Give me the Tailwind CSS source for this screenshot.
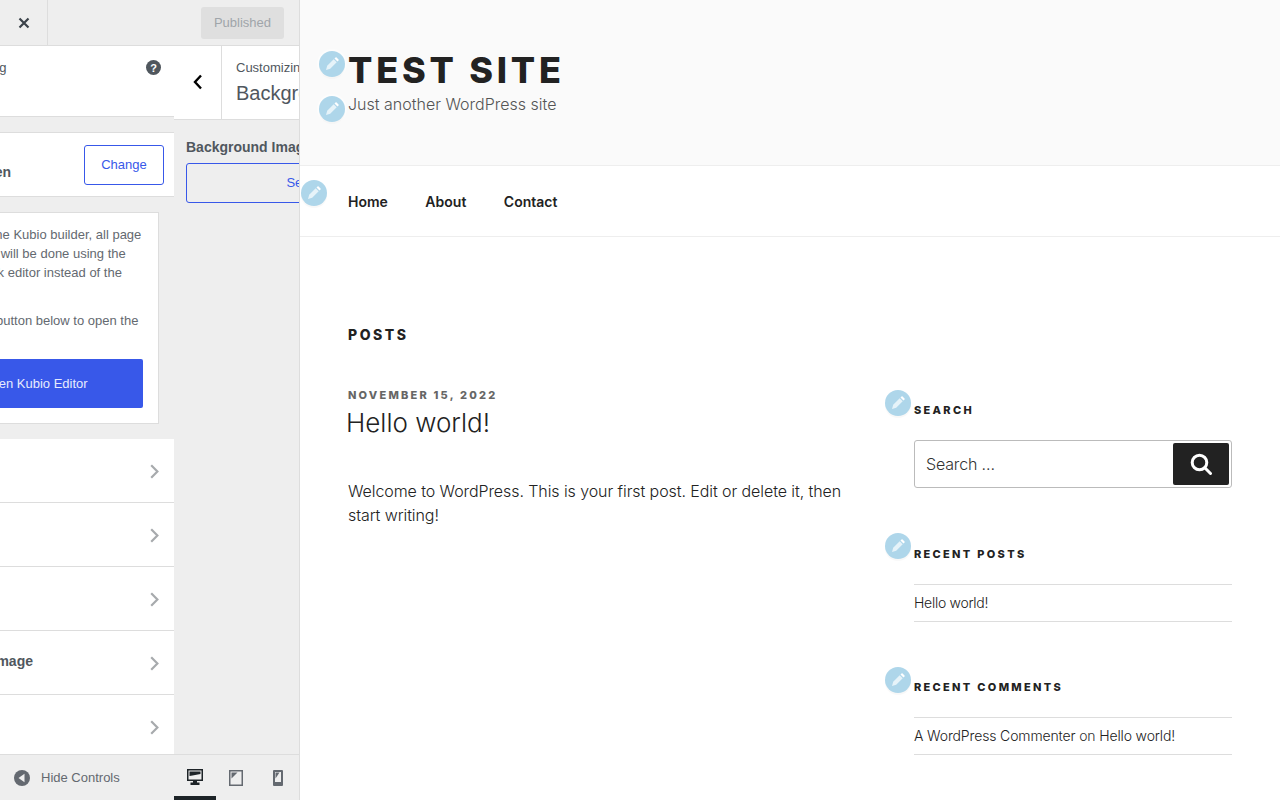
<!DOCTYPE html>
<html lang="en">
<head>
    <meta charset="UTF-8">
    <meta name="viewport" content="width=device-width, initial-scale=1.0">
    <title>Customize: Test Site</title>
    <script src="https://cdn.jsdelivr.net/npm/@tailwindcss/browser@4"></script>
</head>
<body class="h-[800px] w-[1280px] overflow-hidden flex font-['Liberation_Sans',sans-serif] bg-white">

    <!-- Customizer sidebar -->
    <aside class="w-[300px] h-[800px] shrink-0 flex flex-col bg-[#eeeeee] border-r border-[#dddddd] overflow-hidden">
        <!-- Top actions -->
        <div class="h-[46px] shrink-0 flex items-center border-b border-[#dddddd]">
            <div class="w-[48px] h-[45px] flex items-center justify-center border-r border-[#dddddd]">
                <svg class="w-[12px] h-[12px]" viewBox="0 0 12 12"><path d="M1.5 1.500l9 9M10.500 1.500l-9 9" stroke="#3c434a" stroke-width="2.2"/></svg>
            </div>
            <div class="ml-auto mr-[15px] w-[83px] h-[32px] rounded-[3px] bg-[#dfdfdf] text-[#a0a5aa] text-[13px] flex items-center justify-center">Published</div>
        </div>

        <div class="flex flex-1 min-h-0">
            <!-- Outer panel, slid off to the left -->
            <div class="w-[174px] shrink-0 overflow-hidden">
                <div class="w-[300px] ml-[-126px]">
                    <div class="h-[71px] bg-white border-b border-[#dddddd] relative">
                        <div class="text-[13px] text-[#50575e] pl-[16px] pt-[12px] whitespace-nowrap">You are customizing</div>
                        <svg class="absolute left-[272px] top-[14px] w-[15px] h-[15px]" viewBox="0 0 15 15"><circle cx="7.500" cy="7.500" r="7.500" fill="#50575e"/><text x="7.500" y="11.500" text-anchor="middle" font-size="11" font-weight="700" fill="#fff" font-family="Liberation Sans">?</text></svg>
                    </div>
                    <div class="mt-[15px] h-[65px] bg-white border-y border-[#dddddd] relative">
                        <div class="absolute right-[163px] top-[32px] text-[14px] font-bold text-[#50575e] whitespace-nowrap leading-none">Active screen</div>
                        <div class="absolute left-[210px] top-[12px] w-[80px] h-[40px] rounded-[3px] border border-[#3858e9] text-[#3858e9] text-[13px] flex items-center justify-center">Change</div>
                    </div>
                    <div class="mt-[15px] ml-[15px] w-[270px] h-[212px] bg-white border border-[#dddddd] text-[13px] leading-[19px] text-[#646970] pt-[12px] pl-[15px]">
                        <p class="whitespace-nowrap">When you use the Kubio builder, all page<br><span class="ml-[1px]">content building will be done using the</span><br><span class="ml-[3px]">your Kubio block editor instead of the</span><br>WordPress.</p>
                        <p class="whitespace-nowrap mt-[10px]"><span class="ml-[5px]">Click the large button below to open the</span><br>editor.</p>
                        <div class="mt-[10px] w-[238px] h-[49px] rounded-[2px] bg-[#3858e9] text-[#e6ebfd] flex items-center justify-center text-[13px] pl-[21px]">Open Kubio Editor</div>
                    </div>
                    <div class="mt-[15px]">
                        <div class="h-[64px] bg-white border-b border-[#dddddd] flex items-center justify-end pr-[15px] pt-[2px]">
                            <svg class="w-[9px] h-[15px]" viewBox="0 0 9 15"><path d="M1.200 1.200l6.200 6.300-6.200 6.300" fill="none" stroke="#a7aaad" stroke-width="2.2"/></svg>
                        </div>
                        <div class="h-[64px] bg-white border-b border-[#dddddd] flex items-center justify-end pr-[15px] pt-[2px]">
                            <svg class="w-[9px] h-[15px]" viewBox="0 0 9 15"><path d="M1.200 1.200l6.200 6.300-6.200 6.300" fill="none" stroke="#a7aaad" stroke-width="2.2"/></svg>
                        </div>
                        <div class="h-[64px] bg-white border-b border-[#dddddd] flex items-center justify-end pr-[15px] pt-[2px]">
                            <svg class="w-[9px] h-[15px]" viewBox="0 0 9 15"><path d="M1.200 1.200l6.200 6.300-6.200 6.300" fill="none" stroke="#a7aaad" stroke-width="2.2"/></svg>
                        </div>
                        <div class="h-[64px] bg-white border-b border-[#dddddd] flex items-center pr-[15px] pt-[2px] relative">
                            <div class="absolute right-[141px] top-[23px] text-[14px] font-bold text-[#50575e] whitespace-nowrap leading-none">Background Image</div>
                            <svg class="ml-auto w-[9px] h-[15px]" viewBox="0 0 9 15"><path d="M1.200 1.200l6.200 6.300-6.200 6.300" fill="none" stroke="#a7aaad" stroke-width="2.2"/></svg>
                        </div>
                        <div class="h-[64px] bg-white flex items-center justify-end pr-[15px] pt-[1px]">
                            <svg class="w-[9px] h-[15px]" viewBox="0 0 9 15"><path d="M1.200 1.200l6.200 6.300-6.200 6.300" fill="none" stroke="#a7aaad" stroke-width="2.2"/></svg>
                        </div>
                    </div>
                </div>
            </div>

            <!-- Active section panel, clipped by the sidebar -->
            <div class="w-[300px] shrink-0">
                <div class="h-[74px] flex bg-white border-b border-[#dddddd]">
                    <div class="w-[48px] shrink-0 flex items-center justify-center border-r border-[#dddddd] pb-[2px]">
                        <svg class="w-[10px] h-[16px]" viewBox="0 0 10 16"><path d="M8 1.500L2 8l6 6.500" fill="none" stroke="#000" stroke-width="2.4"/></svg>
                    </div>
                    <div class="pl-[14px] pt-[14px] whitespace-nowrap">
                        <div class="text-[13px] leading-[16px] text-[#50575e]">Customizing</div>
                        <div class="text-[20px] leading-[26px] mt-[4px] text-[#50575e]">Background Image</div>
                    </div>
                </div>
                <div class="pl-[12px] pr-[12px] pt-[18px]">
                    <div class="text-[14px] font-bold leading-[18px] text-[#50575e]">Background Image</div>
                    <div class="mt-[7px] h-[40px] rounded-[3px] border border-[#3858e9] text-[#3858e9] text-[13px] flex items-center justify-center">Select image</div>
                </div>
            </div>
        </div>

        <!-- Footer -->
        <div class="h-[46px] shrink-0 flex items-center border-t border-[#dddddd] relative">
            <svg class="ml-[14px] w-[16px] h-[16px]" viewBox="0 0 16 16"><circle cx="8" cy="8" r="8" fill="#646970"/><path d="M10.500 3.800v8.400L4.500 8z" fill="#eee"/></svg>
            <span class="ml-[11px] text-[13px] text-[#646970]">Hide Controls</span>
            <div class="absolute left-[174px] top-0 w-[42px] h-[45px] flex items-center justify-center border-b-[4px] border-[#1d2327]">
                <svg class="w-[16px] h-[16px] mt-[3px]" viewBox="0 0 16 16"><path d="M0 0h16v12H10v1.500h2.500V16h-9v-2.500H6V12H0z" fill="#1d2327"/><path d="M1.500 1.500h13v9h-13z" fill="#eee"/><path d="M2.500 2.500h11v2.500l-8 1.500-3 .5z" fill="#1d2327"/></svg>
            </div>
            <div class="absolute left-[215px] top-0 w-[42px] h-[45px] flex items-center justify-center">
                <svg class="w-[14px] h-[16px]" viewBox="0 0 14 16"><path d="M0 0h14v16H0z" fill="#646970"/><path d="M1.500 1.500h11v13h-11z" fill="#eee"/><path d="M2.500 2.500h6l-6 6z" fill="#646970"/></svg>
            </div>
            <div class="absolute left-[257px] top-0 w-[42px] h-[45px] flex items-center justify-center">
                <svg class="w-[10px] h-[16px]" viewBox="0 0 10 16"><path d="M0 1a1 1 0 0 1 1-1h8a1 1 0 0 1 1 1v14a1 1 0 0 1-1 1H1a1 1 0 0 1-1-1z" fill="#646970"/><path d="M2 2h6v10H2z" fill="#eee"/><path d="M2.500 2.500h4l-4 6z" fill="#646970"/></svg>
            </div>
        </div>
    </aside>

    <!-- Site preview -->
    <main class="relative flex-1 h-[800px] overflow-hidden font-['Inter',sans-serif] text-[#222222]">
        <header class="h-[166px] bg-[#fafafa] border-b border-[#eeeeee] pl-[48px] pt-[48px]">
            <div class="text-[36px] leading-[44px] font-extrabold tracking-[0.105em] uppercase">Test Site</div>
            <div class="text-[16px] leading-[24px] font-light text-[#555555]">Just another WordPress site</div>
        </header>
        <nav class="h-[71px] border-b border-[#eeeeee] pl-[48px] flex items-center gap-[37.500px] text-[14px] font-semibold pt-[1px]">
            <span>Home</span><span>About</span><span>Contact</span>
        </nav>
        <div class="flex pl-[48px] pr-[48px]">
            <section class="w-[500px] pt-[89px]">
                <h2 class="text-[14px] leading-[18px] font-extrabold tracking-[0.18em] uppercase">Posts</h2>
                <div class="mt-[44px] text-[11px] leading-[14px] font-extrabold tracking-[0.2em] uppercase text-[#666666]">November 15, 2022</div>
                <h3 class="text-[26px] leading-[34px] font-light ml-[-2px] mt-[4px]">Hello world!</h3>
                <p class="mt-[39px] text-[16px] leading-[24px] font-light text-[#222222] tracking-[-0.005em]">Welcome to WordPress. This is your first post. Edit or delete it, then start writing!</p>
            </section>
            <section class="w-[318px] ml-[66px] pt-[166px]">
                <h4 class="text-[11px] leading-[14px] font-extrabold tracking-[0.21em] uppercase">Search</h4>
                <div class="mt-[23px] h-[48px] rounded-[3px] border border-[#bbbbbb] flex items-center pl-[11px] pr-[2px] text-[16px] text-[#333333]">
                    <span class="pb-[1px] font-light tracking-[-0.01em]">Search …</span>
                    <div class="ml-auto w-[56px] h-[42px] rounded-[2px] bg-[#222222] flex items-center justify-center">
                        <svg class="w-[22px] h-[22px]" viewBox="0 0 22 22"><circle cx="9.500" cy="9.500" r="7.300" fill="none" stroke="#fff" stroke-width="3"/><path d="M14.800 14.800l5.700 5.700" stroke="#fff" stroke-width="3" stroke-linecap="round"/></svg>
                    </div>
                </div>
                <h4 class="mt-[59px] text-[11px] leading-[14px] font-extrabold tracking-[0.21em] uppercase">Recent Posts</h4>
                <div class="mt-[23px] border-y border-[#dddddd] h-[38px] flex items-center pb-[2px] text-[14px] font-light tracking-[-0.02em] text-[#222222]">Hello world!</div>
                <h4 class="mt-[58px] text-[11px] leading-[14px] font-extrabold tracking-[0.21em] uppercase">Recent Comments</h4>
                <div class="mt-[23px] border-y border-[#dddddd] h-[38px] flex items-center pb-[2px] text-[14px] font-light tracking-[-0.01em] text-[#222222]">A WordPress Commenter&nbsp;<span class="text-[#333333]">on</span>&nbsp;Hello world!</div>
            </section>
        </div>

        <!-- Edit shortcuts over the preview -->
        <div class="absolute left-[19px] top-[51px] w-[26px] h-[26px] rounded-full bg-[#aed6ea] shadow-[0_2px_1px_rgba(0,0,0,0.03),0_0_0_2px_rgba(255,255,255,0.5)] flex items-center justify-center">
            <svg class="w-[14px] h-[14px]" viewBox="0 0 14 14"><path d="M8.700 2.300l3 3-6.500 6.500-4.200 1.200 1.200-4.200z" fill="#e6f3f9"/><path d="M9.500 1.500l1-1a.8.8 0 0 1 1.100 0l1.900 1.900a.8.8 0 0 1 0 1.100l-1 1z" fill="#fff"/></svg>
        </div>
        <div class="absolute left-[19px] top-[96px] w-[26px] h-[26px] rounded-full bg-[#aed6ea] shadow-[0_2px_1px_rgba(0,0,0,0.03),0_0_0_2px_rgba(255,255,255,0.5)] flex items-center justify-center">
            <svg class="w-[14px] h-[14px]" viewBox="0 0 14 14"><path d="M8.700 2.300l3 3-6.500 6.500-4.200 1.200 1.200-4.200z" fill="#e6f3f9"/><path d="M9.500 1.500l1-1a.8.8 0 0 1 1.100 0l1.900 1.900a.8.8 0 0 1 0 1.100l-1 1z" fill="#fff"/></svg>
        </div>
        <div class="absolute left-[1px] top-[180px] w-[26px] h-[26px] rounded-full bg-[#aed6ea] shadow-[0_2px_1px_rgba(0,0,0,0.03),0_0_0_2px_rgba(255,255,255,0.5)] flex items-center justify-center">
            <svg class="w-[14px] h-[14px]" viewBox="0 0 14 14"><path d="M8.700 2.300l3 3-6.500 6.500-4.200 1.200 1.200-4.200z" fill="#e6f3f9"/><path d="M9.500 1.500l1-1a.8.8 0 0 1 1.100 0l1.900 1.900a.8.8 0 0 1 0 1.100l-1 1z" fill="#fff"/></svg>
        </div>
        <div class="absolute left-[585px] top-[390px] w-[26px] h-[26px] rounded-full bg-[#aed6ea] shadow-[0_2px_1px_rgba(0,0,0,0.03),0_0_0_2px_rgba(255,255,255,0.5)] flex items-center justify-center">
            <svg class="w-[14px] h-[14px]" viewBox="0 0 14 14"><path d="M8.700 2.300l3 3-6.500 6.500-4.200 1.200 1.200-4.200z" fill="#e6f3f9"/><path d="M9.500 1.500l1-1a.8.8 0 0 1 1.100 0l1.900 1.900a.8.8 0 0 1 0 1.100l-1 1z" fill="#fff"/></svg>
        </div>
        <div class="absolute left-[585px] top-[533px] w-[26px] h-[26px] rounded-full bg-[#aed6ea] shadow-[0_2px_1px_rgba(0,0,0,0.03),0_0_0_2px_rgba(255,255,255,0.5)] flex items-center justify-center">
            <svg class="w-[14px] h-[14px]" viewBox="0 0 14 14"><path d="M8.700 2.300l3 3-6.500 6.500-4.200 1.200 1.200-4.200z" fill="#e6f3f9"/><path d="M9.500 1.500l1-1a.8.8 0 0 1 1.100 0l1.900 1.900a.8.8 0 0 1 0 1.100l-1 1z" fill="#fff"/></svg>
        </div>
        <div class="absolute left-[585px] top-[667px] w-[26px] h-[26px] rounded-full bg-[#aed6ea] shadow-[0_2px_1px_rgba(0,0,0,0.03),0_0_0_2px_rgba(255,255,255,0.5)] flex items-center justify-center">
            <svg class="w-[14px] h-[14px]" viewBox="0 0 14 14"><path d="M8.700 2.300l3 3-6.500 6.500-4.200 1.200 1.200-4.200z" fill="#e6f3f9"/><path d="M9.500 1.500l1-1a.8.8 0 0 1 1.100 0l1.900 1.900a.8.8 0 0 1 0 1.100l-1 1z" fill="#fff"/></svg>
        </div>
    </main>
</body>
</html>
